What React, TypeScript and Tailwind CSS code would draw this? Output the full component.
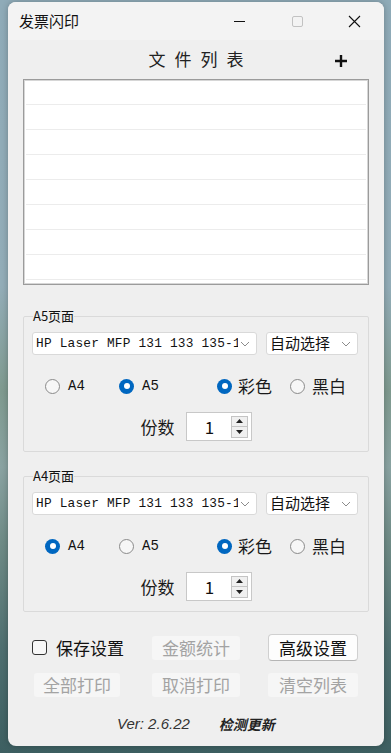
import React from 'react'

const cjk = '"Noto Sans CJK SC", "Noto Sans", sans-serif'
const mono = '"Liberation Mono", "Noto Sans CJK SC", monospace'

function Radio({ checked }: { checked: boolean }) {
  return checked ? (
    <span className="shrink-0 w-[15px] h-[15px] rounded-full bg-[#0067c0] flex items-center justify-center">
      <span className="w-[6px] h-[6px] rounded-full bg-white" />
    </span>
  ) : (
    <span className="shrink-0 w-[15px] h-[15px] rounded-full border border-[#8a8a8a] bg-[#f7f7f7]" />
  )
}

function Chevron() {
  return (
    <svg width="10" height="6" viewBox="0 0 10 6" className="shrink-0">
      <path d="M1 1 L5 5 L9 1" fill="none" stroke="#8c8c8c" strokeWidth="1" />
    </svg>
  )
}

function Group({ title, paper }: { title: string; paper: 'A4' | 'A5' }) {
  return (
    <fieldset className="mx-[15px] border border-[#dadada] rounded-[2px] px-[8px] pb-[10px]">
      <legend className="text-[13px] leading-[18px] text-[#111] ml-[1px]" style={{ fontFamily: cjk }}>
        {title}
      </legend>
      <div className="flex gap-[9px] mt-[7px]">
        <div className="w-[225px] h-[23px] bg-white border border-[#d9d9d9] rounded-[3px] flex items-center pl-[3px] pr-[6px]">
          <span
            className="flex-1 overflow-hidden whitespace-nowrap text-[12.8px] text-[#111] tracking-[0.2px]"
            style={{ fontFamily: mono }}
          >
            HP Laser MFP 131 133 135-138
          </span>
          <span className="ml-[2px]">
            <Chevron />
          </span>
        </div>
        <div className="w-[92px] h-[23px] bg-white border border-[#d9d9d9] rounded-[3px] flex items-center justify-between pl-[3px] pr-[6px]">
          <span className="text-[15px] text-[#111]" style={{ fontFamily: cjk }}>
            自动选择
          </span>
          <Chevron />
        </div>
      </div>
      <div className="flex items-center h-[24px] mt-[19px] pl-[13px]">
        <div className="w-[74px] flex items-center gap-[8px]">
          <Radio checked={paper === 'A4'} />
          <span className="text-[14px] text-[#111]" style={{ fontFamily: mono }}>A4</span>
        </div>
        <div className="w-[98px] flex items-center gap-[8px]">
          <Radio checked={paper === 'A5'} />
          <span className="text-[14px] text-[#111]" style={{ fontFamily: mono }}>A5</span>
        </div>
        <div className="w-[73px] flex items-center gap-[6px]">
          <Radio checked />
          <span className="text-[17px] text-[#1a1a1a]" style={{ fontFamily: cjk }}>彩色</span>
        </div>
        <div className="flex items-center gap-[7px]">
          <Radio checked={false} />
          <span className="text-[17px] text-[#1a1a1a]" style={{ fontFamily: cjk }}>黑白</span>
        </div>
      </div>
      <div className="flex items-center justify-center gap-[11px] mt-[14px]">
        <span className="text-[17px] text-[#1a1a1a]" style={{ fontFamily: cjk }}>份数</span>
        <div className="w-[66px] h-[29px] bg-white border border-[#c8c8c8] flex items-center">
          <span className="flex-1 text-center text-[17px] text-[#111] pl-[2px]" style={{ fontFamily: cjk }}>
            1
          </span>
          <div className="w-[17px] h-[22px] mr-[3px] flex flex-col border border-[#c4c4c4] bg-[#f0f0f0]">
            <div className="flex-1 flex items-center justify-center border-b border-[#c4c4c4]">
              <svg width="7" height="4" viewBox="0 0 7 4"><path d="M0 4 L3.5 0 L7 4 Z" fill="#222" /></svg>
            </div>
            <div className="flex-1 flex items-center justify-center">
              <svg width="7" height="4" viewBox="0 0 7 4"><path d="M0 0 L3.5 4 L7 0 Z" fill="#222" /></svg>
            </div>
          </div>
        </div>
      </div>
    </fieldset>
  )
}

function Btn({ label, enabled, w = 88 }: { label: string; enabled?: boolean; w?: number }) {
  return (
    <div
      className={
        enabled
          ? 'h-[27px] bg-[#fdfdfd] border border-[#d0d0d0] border-b-[#b5b5b5] rounded-[4px] flex items-center justify-center text-[17px] text-[#111]'
          : 'h-[24px] bg-[#f6f6f6] rounded-[3px] flex items-center justify-center text-[17px] text-[#a3a3a3]'
      }
      style={{ fontFamily: cjk, width: w }}
    >
      {label}
    </div>
  )
}

export default function App() {
  return (
    <div
      className="w-[391px] h-[753px] overflow-hidden pl-[8px] pt-[2px]"
      style={{
        background:
          'linear-gradient(180deg, #8fabb8 0%, #93adb8 38%, #7f9a8f 52%, #8aa3a2 62%, #6f8b86 72%, #4f6f70 86%, #3d5f61 100%)',
      }}
    >
      <div className="w-[376px] h-[744px] bg-[#efefef] rounded-[8px] shadow-[0_0_6px_rgba(0,0,0,0.25)] flex flex-col overflow-hidden">
        <div className="h-[38px] bg-[#f3f3f3] flex items-center">
          <span className="pl-[11px] flex-1 text-[15px] text-[#111]" style={{ fontFamily: cjk }}>
            发票闪印
          </span>
          <div className="w-[58px] h-full flex items-center justify-center">
            <span className="w-[11px] h-px bg-[#111]" />
          </div>
          <div className="w-[58px] h-full flex items-center justify-center">
            <span className="w-[11px] h-[11px] border border-[#c2c2c2] rounded-[2px]" />
          </div>
          <div className="w-[58px] h-full flex items-center justify-center pr-[2px]">
            <svg width="13" height="13" viewBox="0 0 13 13">
              <path d="M1 1 L12 12 M12 1 L1 12" stroke="#111" strokeWidth="1.1" />
            </svg>
          </div>
        </div>

        <div className="h-[39px] grid grid-cols-[1fr_auto_1fr] items-center">
          <span />
          <span className="text-[17px] text-[#222] tracking-[9px] pl-[9px] pb-[2px]" style={{ fontFamily: cjk }}>
            文件列表
          </span>
          <span className="justify-self-end pr-[36px] pt-[3px]">
            <svg width="14" height="14" viewBox="0 0 14 14">
              <path d="M7 1 V13 M1 7 H13" stroke="#111" strokeWidth="2.4" />
            </svg>
          </span>
        </div>

        <div className="mx-[15px] h-[206px] bg-white border border-[#9b9b9b] shadow-[inset_0_0_0_1px_#d6d6d6] overflow-hidden">
          {Array.from({ length: 8 }).map((_, i) => (
            <div key={i} className="h-[25px] mx-[2px] border-b border-[#ececec]" />
          ))}
        </div>

        <div className="mt-[22px]">
          <Group title="A5页面" paper="A5" />
        </div>
        <div className="mt-[15px]">
          <Group title="A4页面" paper="A4" />
        </div>

        <div className="flex items-center pl-[24px] mt-[22px]">
          <div className="w-[120px] flex items-center gap-[9px]">
            <span className="w-[15px] h-[15px] border border-[#333] rounded-[3px] bg-[#f7f7f7]" />
            <span className="text-[17px] text-[#111]" style={{ fontFamily: cjk }}>保存设置</span>
          </div>
          <div className="w-[116px]">
            <Btn label="金额统计" />
          </div>
          <Btn label="高级设置" enabled w={90} />
        </div>
        <div className="flex items-center pl-[26px] mt-[12px]">
          <div className="w-[118px]">
            <Btn label="全部打印" w={86} />
          </div>
          <div className="w-[116px]">
            <Btn label="取消打印" />
          </div>
          <Btn label="清空列表" w={90} />
        </div>

        <div className="flex items-center mt-[16px] pl-[109px] gap-[29px]">
          <span className="italic text-[15px] text-[#333]" style={{ fontFamily: '"Liberation Sans", sans-serif' }}>
            Ver: 2.6.22
          </span>
          <span className="italic font-bold text-[14px] text-[#222]" style={{ fontFamily: cjk }}>
            检测更新
          </span>
        </div>
      </div>
    </div>
  )
}
